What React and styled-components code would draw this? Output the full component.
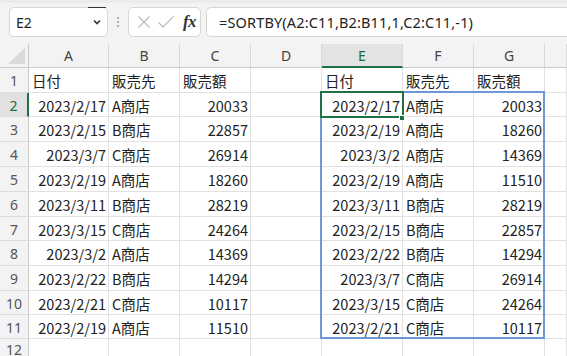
import React from "react";
import styled, { createGlobalStyle } from "styled-components";

const Global = createGlobalStyle`
  html, body { margin: 0; padding: 0; background: #ffffff; }
  body { width: 567px; height: 356px; overflow: hidden; font-family: "Noto Sans CJK JP", "Noto Sans", sans-serif; }
`;

const Page = styled.div`
  width: 567px;
  height: 356px;
  overflow: hidden;
  display: flex;
  flex-direction: column;
  background: #ffffff;
`;

const Toolbar = styled.div`
  height: 44px;
  flex: 0 0 44px;
  box-sizing: border-box;
  display: flex;
  align-items: flex-start;
  padding: 4px 0 0 9px;
  background: #f3f3f3;
  border-top: 3px solid #ebebeb;
  overflow: hidden;
`;

const Box = styled.div`
  position: relative;
  flex-shrink: 0;
  height: 30px;
  box-sizing: border-box;
  background: #ffffff;
  border: 1px solid #d6d6d6;
  border-radius: 5px;
  display: flex;
  align-items: center;
`;

const NameBox = styled(Box)`
  width: 99px;
  padding: 0 5px 0 6px;
  justify-content: space-between;
  font-family: "Noto Sans", "Open Sans", sans-serif;
  font-size: 14px;
  color: #222;
  &::after {
    content: "";
    position: absolute;
    top: -1px;
    right: 1px;
    width: 18px;
    height: 1px;
    background: #333;
  }
`;

const Dots = styled.div`
  flex-shrink: 0;
  width: 20px;
  height: 30px;
  display: flex;
  align-items: center;
  justify-content: center;
`;

const IconBox = styled(Box)`
  width: 73px;
  padding: 0 0 0 4px;
`;

const IconSlot = styled.div`
  width: 22px;
  height: 28px;
  display: flex;
  align-items: center;
  justify-content: center;
`;

const Fx = styled.span`
  font-family: "Liberation Serif", "DejaVu Serif", serif;
  font-style: italic;
  font-weight: bold;
  font-size: 17px;
  color: #333;
  letter-spacing: -0.5px;
  margin-left: 3px;
`;

const FormulaBox = styled(Box)`
  margin-left: 5px;
  width: 380px;
  padding-left: 12px;
  font-family: "Noto Sans", "Open Sans", sans-serif;
  font-size: 14.5px;
  color: #222;
  letter-spacing: 0.15px;
  white-space: nowrap;
`;

const SheetWrap = styled.div`
  position: relative;
  flex: 1;
`;

const Grid = styled.div`
  display: grid;
  grid-template-columns: 29px 80px 71px 71px 71px 81px 71px 71px 1fr;
  grid-template-rows: 24px 25px 24px 25px 25px 25px 25px 24px 25px 25px 24px 24px 1fr;
  height: 312px;
`;

const Cell = styled.div`
  box-sizing: border-box;
  border-right: 1px solid #e1e1e1;
  border-bottom: 1px solid #e1e1e1;
  display: flex;
  align-items: center;
  justify-content: ${(p) => (p.$right ? "flex-end" : "flex-start")};
  padding: ${(p) => (p.$right ? "1px 2px 0 0" : "1px 0 0 3px")};
  font-size: 14.5px;
  color: #222;
  white-space: nowrap;
  overflow: visible;
  background: #ffffff;
`;

const ColHead = styled.div`
  box-sizing: border-box;
  background: ${(p) => (p.$active ? "#e3e3e3" : "#f3f3f3")};
  border-right: 1px solid #d8d8d8;
  border-bottom: ${(p) => (p.$active ? "2px solid #1e7145" : "1px solid #c9c9c9")};
  display: flex;
  align-items: center;
  justify-content: center;
  font-family: "Noto Sans", "Open Sans", sans-serif;
  font-size: 14px;
  color: ${(p) => (p.$active ? "#1a6b3e" : "#444")};
  padding-top: ${(p) => (p.$active ? "1px" : "0")};
`;

const Corner = styled.div`
  box-sizing: border-box;
  background: #f3f3f3;
  border-right: 1px solid #c9c9c9;
  border-bottom: 1px solid #c9c9c9;
  display: flex;
  align-items: flex-end;
  justify-content: flex-end;
  padding: 0 3px 3px 0;
`;

const RowHead = styled.div`
  box-sizing: border-box;
  background: ${(p) => (p.$active ? "#e1e1e1" : "#f3f3f3")};
  border-right: ${(p) => (p.$active ? "2px solid #1e7145" : "1px solid #c9c9c9")};
  border-bottom: 1px solid #dcdcdc;
  display: flex;
  align-items: center;
  justify-content: center;
  font-family: "Noto Sans", "Open Sans", sans-serif;
  font-size: 14px;
  color: ${(p) => (p.$active ? "#1a6b3e" : "#555")};
  padding-top: 1px;
`;

const RangeBorder = styled.div`
  position: absolute;
  left: 320px;
  top: 47px;
  width: 225px;
  height: 248px;
  box-sizing: border-box;
  border: 2px solid #6f96d8;
  pointer-events: none;
`;

const ActiveCell = styled.div`
  position: absolute;
  left: 320px;
  top: 47px;
  width: 84px;
  height: 27px;
  box-sizing: border-box;
  border: 2px solid #1e7145;
  pointer-events: none;
`;

const FillHandle = styled.div`
  position: absolute;
  left: 399px;
  top: 71px;
  width: 6px;
  height: 6px;
  box-sizing: border-box;
  background: #1e7145;
  border: 1px solid #ffffff;
`;

const cols = ["A", "B", "C", "D", "E", "F", "G", ""];

const left = [
  ["2023/2/17", "A商店", "20033"],
  ["2023/2/15", "B商店", "22857"],
  ["2023/3/7", "C商店", "26914"],
  ["2023/2/19", "A商店", "18260"],
  ["2023/3/11", "B商店", "28219"],
  ["2023/3/15", "C商店", "24264"],
  ["2023/3/2", "A商店", "14369"],
  ["2023/2/22", "B商店", "14294"],
  ["2023/2/21", "C商店", "10117"],
  ["2023/2/19", "A商店", "11510"],
];

const right = [
  ["2023/2/17", "A商店", "20033"],
  ["2023/2/19", "A商店", "18260"],
  ["2023/3/2", "A商店", "14369"],
  ["2023/2/19", "A商店", "11510"],
  ["2023/3/11", "B商店", "28219"],
  ["2023/2/15", "B商店", "22857"],
  ["2023/2/22", "B商店", "14294"],
  ["2023/3/7", "C商店", "26914"],
  ["2023/3/15", "C商店", "24264"],
  ["2023/2/21", "C商店", "10117"],
];

const header = ["日付", "販売先", "販売額"];

function rowCells(r) {
  if (r === 1) {
    return [...header, "", ...header, ""].map((v, i) => <Cell key={i}>{v}</Cell>);
  }
  if (r >= 2 && r <= 11) {
    const a = left[r - 2];
    const b = right[r - 2];
    return [
      <Cell key="a" $right>{a[0]}</Cell>,
      <Cell key="b">{a[1]}</Cell>,
      <Cell key="c" $right>{a[2]}</Cell>,
      <Cell key="d" />,
      <Cell key="e" $right>{b[0]}</Cell>,
      <Cell key="f">{b[1]}</Cell>,
      <Cell key="g" $right>{b[2]}</Cell>,
      <Cell key="h" />,
    ];
  }
  return cols.map((_, i) => <Cell key={i} />);
}

export default function App() {
  const rows = Array.from({ length: 12 }, (_, i) => i + 1);
  return (
    <Page>
      <Global />
      <Toolbar>
        <NameBox>
          <span>E2</span>
          <svg width="10" height="8" viewBox="0 0 10 8">
            <path d="M2 2.5 L5 5.5 L8 2.5" fill="none" stroke="#333" strokeWidth="1.6" />
          </svg>
        </NameBox>
        <Dots>
          <svg width="4" height="12" viewBox="0 0 4 12">
            <circle cx="2" cy="2" r="1" fill="#9a9a9a" />
            <circle cx="2" cy="6" r="1" fill="#9a9a9a" />
            <circle cx="2" cy="10" r="1" fill="#9a9a9a" />
          </svg>
        </Dots>
        <IconBox>
          <IconSlot>
            <svg width="14" height="14" viewBox="0 0 14 14">
              <path d="M1.5 1.5 L12.5 12.5 M12.5 1.5 L1.5 12.5" stroke="#b8b8b8" strokeWidth="1.1" fill="none" />
            </svg>
          </IconSlot>
          <IconSlot>
            <svg width="18" height="14" viewBox="0 0 18 14">
              <path d="M1.5 7.5 L6 12 L16.5 1.5" stroke="#b8b8b8" strokeWidth="1.1" fill="none" />
            </svg>
          </IconSlot>
          <IconSlot>
            <Fx>fx</Fx>
          </IconSlot>
        </IconBox>
        <FormulaBox>=SORTBY(A2:C11,B2:B11,1,C2:C11,-1)</FormulaBox>
      </Toolbar>
      <SheetWrap>
        <Grid>
          <Corner>
            <svg width="17" height="16" viewBox="0 0 17 16">
              <path d="M17 0 L17 16 L0 16 Z" fill="#dadada" />
            </svg>
          </Corner>
          {cols.map((c, i) => (
            <ColHead key={i} $active={c === "E"}>{c}</ColHead>
          ))}
          {rows.map((r) => (
            <React.Fragment key={r}>
              <RowHead $active={r === 2}>{r}</RowHead>
              {rowCells(r)}
            </React.Fragment>
          ))}
        </Grid>
        <RangeBorder />
        <ActiveCell />
        <FillHandle />
      </SheetWrap>
    </Page>
  );
}
